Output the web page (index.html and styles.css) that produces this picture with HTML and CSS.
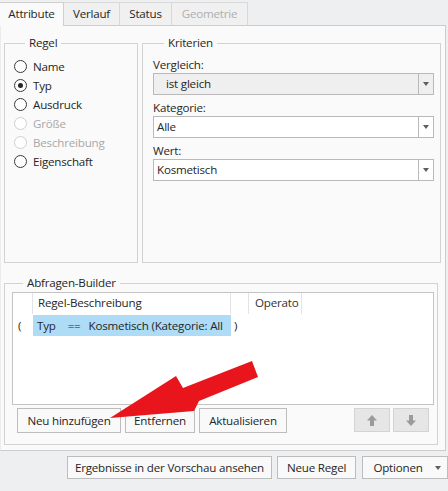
FILE: index.html
```html
<!DOCTYPE html>
<html>
<head>
<meta charset="utf-8">
<link rel="stylesheet" href="styles.css">
</head>
<body>
<div class="tabs">
  <div class="tab active">Attribute</div>
  <div class="tab">Verlauf</div>
  <div class="tab">Status</div>
  <div class="tab disabled">Geometrie</div>
</div>
<div class="panel">
  <div class="top-row">
    <fieldset class="group regel">
      <legend>Regel</legend>
      <div class="radio"><span class="circle"></span>Name</div>
      <div class="radio"><span class="circle checked"></span>Typ</div>
      <div class="radio"><span class="circle"></span>Ausdruck</div>
      <div class="radio off"><span class="circle"></span>Größe</div>
      <div class="radio off"><span class="circle"></span>Beschreibung</div>
      <div class="radio"><span class="circle"></span>Eigenschaft</div>
    </fieldset>
    <fieldset class="group kriterien">
      <legend>Kriterien</legend>
      <div class="label">Vergleich:</div>
      <div class="combo grey"><span class="value">ist gleich</span><span class="drop"><span class="tri"></span></span></div>
      <div class="label">Kategorie:</div>
      <div class="combo"><span class="value">Alle</span><span class="drop"><span class="tri"></span></span></div>
      <div class="label">Wert:</div>
      <div class="combo"><span class="value">Kosmetisch</span><span class="drop"><span class="tri"></span></span></div>
    </fieldset>
  </div>
  <fieldset class="group builder">
    <legend>Abfragen-Builder</legend>
    <div class="list">
      <div class="head">
        <div class="c0"></div>
        <div class="c1">Regel-Beschreibung</div>
        <div class="c2"></div>
        <div class="c3">Operato</div>
      </div>
      <div class="row">
        <div class="c0 paren">(</div>
        <div class="c1 sel"><span class="t1">Typ</span><span class="t2">==</span><span>Kosmetisch (Kategorie: All</span></div>
        <div class="close">)</div>
      </div>
    </div>
    <div class="btn-row">
      <button class="btn b-neu">Neu hinzufügen</button>
      <button class="btn b-ent">Entfernen</button>
      <button class="btn b-akt">Aktualisieren</button>
      <div class="spacer"></div>
      <button class="abtn"><svg width="10" height="11" viewBox="0 0 10 11"><path d="M5 0 L10 5.5 H7 V11 H3 V5.5 H0 Z" fill="#9b9b9b"/></svg></button>
      <button class="abtn"><svg width="10" height="11" viewBox="0 0 10 11"><path d="M5 11 L10 5.5 H7 V0 H3 V5.5 H0 Z" fill="#9b9b9b"/></svg></button>
    </div>
  </fieldset>
</div>
<div class="bottom">
  <button class="btn b-erg">Ergebnisse in der Vorschau ansehen</button>
  <button class="btn b-neue">Neue Regel</button>
  <button class="btn b-opt"><span>Optionen</span><span class="tri"></span></button>
</div>
<svg class="annot" width="448" height="491" viewBox="0 0 448 491">
  <polygon points="110,418 176,376 183,388 252,361 258,377 199,401 194,411" fill="#e8161c"/>
</svg>
</body>
</html>
```

FILE: styles.css
```css
* { box-sizing: border-box; }
html, body { margin: 0; padding: 0; }
body {
  width: 448px;
  height: 491px;
  background: #eeeff0;
  font-family: "Open Sans", "Noto Sans", sans-serif;
  font-size: 11.6px;
  letter-spacing: -0.2px;
  color: #262626;
  position: relative;
  overflow: hidden;
}
.tabs {
  display: flex;
  height: 25px;
  padding-top: 2px;
  align-items: flex-end;
}
.tab {
  height: 23px;
  line-height: 22px;
  text-align: center;
  background: #f0f0f0;
  border: 1px solid #d9d9d9;
  border-bottom: none;
  margin-left: -1px;
}
.tab:nth-child(1) { width: 64px; margin-left: 0; border-left: none; }
.tab:nth-child(2) { width: 57px; }
.tab:nth-child(3) { width: 53px; }
.tab:nth-child(4) { width: 77px; }
.tab.active {
  background: #fafafa;
  height: 24px;
  margin-bottom: -1px;
  position: relative;
  z-index: 1;
  border-color: #cfcfcf;
}
.tab.disabled { color: #aeaeae; }
.panel {
  width: 446px;
  height: 426px;
  background: #fafafa;
  border: 1px solid #cdcdcd;
  border-left-color: #ececec;
  padding: 9px 4px 0 3px;
}
.top-row {
  display: flex;
  gap: 4px;
  height: 228px;
}
.group {
  margin: 0;
  min-width: 0;
  border: 1px solid #d2d2d2;
  padding: 0;
}
.group legend {
  padding: 0 4px;
  margin-left: 11px;
  line-height: 16px;
  height: 16px;
}
.regel { width: 134px; padding: 6px 8px 0 9px; }
.kriterien { width: 299px; padding: 1px 6px 0 10px; }
.radio {
  display: flex;
  align-items: center;
  height: 19px;
  line-height: 19px;
}
.radio.off { color: #a8a8a8; }
.circle {
  width: 13px;
  height: 13px;
  border: 1px solid #3a3a3a;
  border-radius: 50%;
  background: #fff;
  margin-right: 6px;
  display: flex;
  align-items: center;
  justify-content: center;
  flex: none;
}
.radio.off .circle { border-color: #cfcfcf; }
.circle.checked::after {
  content: "";
  width: 5px;
  height: 5px;
  border-radius: 50%;
  background: #262626;
}
.label {
  height: 21px;
  padding-top: 5px;
  line-height: 16px;
}
.combo {
  display: flex;
  height: 22px;
  border: 1px solid #b9b9b9;
  background: #fff;
}
.combo.grey { background: #efefef; }
.combo .value {
  flex: 1;
  line-height: 20px;
  padding-left: 3px;
}
.combo.grey .value { padding-left: 12px; }
.drop {
  width: 15px;
  border-left: 1px solid #b9b9b9;
  display: flex;
  align-items: center;
  justify-content: center;
}
.tri {
  width: 0;
  height: 0;
  border-left: 3.5px solid transparent;
  border-right: 3.5px solid transparent;
  border-top: 4px solid #5e5e5e;
}
.builder {
  width: 434px;
  height: 170px;
  margin-top: 12px;
  padding: 1px 3px 0 7px;
}
.list {
  height: 113px;
  border: 1px solid #c4c4c4;
  background: #fff;
}
.head, .row {
  display: flex;
  height: 21px;
}
.head > div {
  line-height: 20px;
  border-right: 1px solid #e3e3e3;
}
.c0 { width: 20px; }
.c1 { width: 198px; padding-left: 5px; }
.c2 { width: 18px; }
.c3 { width: 53px; padding-left: 6px; overflow: hidden; white-space: nowrap; color: #333; }
.row { margin-top: 1px; height: 21px; line-height: 21px; }
.paren { padding-left: 5px; }
.sel {
  background: #aedcf6;
  padding-left: 4px;
  white-space: nowrap;
  overflow: hidden;
}
.t1 { margin-right: 12px; }
.t2 { margin-right: 8px; }
.close { padding-left: 3px; }
.btn-row {
  display: flex;
  margin-top: 3px;
  padding-left: 5px;
  padding-right: 5px;
  gap: 4px;
  height: 25px;
}
.spacer { flex: 1; }
.btn {
  font: inherit;
  letter-spacing: inherit;
  color: #262626;
  background: #f9f9f9;
  border: 1px solid #bdbdbd;
  padding: 0;
  margin: 0;
  height: 25px;
  line-height: 23px;
}
.b-neu { width: 104px; }
.b-ent { width: 70px; }
.b-akt { width: 88px; }
.abtn {
  width: 36px;
  height: 24px;
  padding: 0;
  margin: 0;
  background: #e6e6e6;
  border: 1px solid #d3d3d3;
  display: flex;
  align-items: center;
  justify-content: center;
}
.abtn + .abtn { margin-left: -1px; }
.bottom {
  display: flex;
  padding: 5px 0 0 67px;
  gap: 5px;
}
.bottom .btn { height: 23px; line-height: 21px; }
.b-erg { width: 206px; }
.b-neue { width: 80px; }
.b-opt {
  width: 86px;
  display: flex;
  align-items: center;
  padding: 0 6px 0 10px;
  justify-content: space-between;
  margin-left: 1px;
}
.annot {
  position: absolute;
  left: 0;
  top: 0;
  pointer-events: none;
}
```
